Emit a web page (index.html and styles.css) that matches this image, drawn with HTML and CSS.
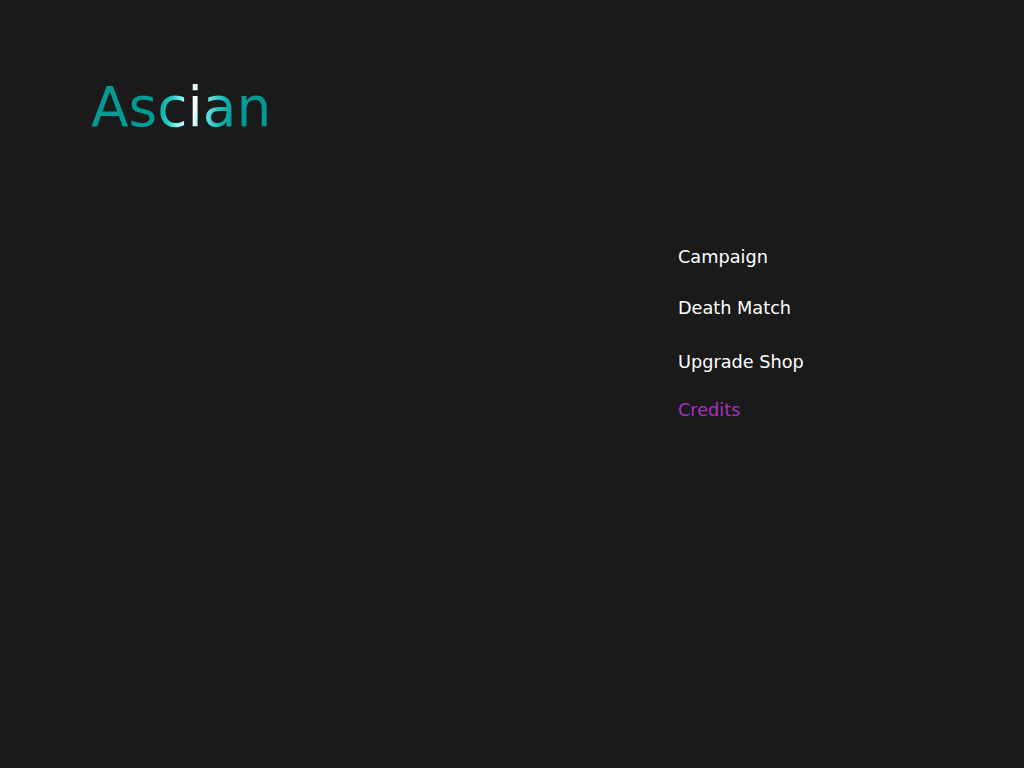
FILE: index.html
```html
<!DOCTYPE html>
<html>
<head>
<meta charset="utf-8">
<link rel="stylesheet" href="styles.css">
</head>
<body>
<div class="screen">
  <h1 class="title">Ascian</h1>
  <nav class="menu">
    <div class="item item-campaign">Campaign</div>
    <div class="item item-death">Death Match</div>
    <div class="item item-shop">Upgrade Shop</div>
    <div class="item item-credits active">Credits</div>
  </nav>
</div>
</body>
</html>
```
FILE: styles.css
```css
html, body {
  margin: 0;
  padding: 0;
  background: #1a1a1a;
}
.screen {
  width: 1024px;
  height: 768px;
  box-sizing: border-box;
  padding: 80px 0 0 91px;
  display: flex;
  flex-direction: column;
  font-family: "DejaVu Sans", Verdana, sans-serif;
}
.title {
  margin: 0;
  font-size: 55px;
  font-weight: normal;
  line-height: 55px;
  align-self: flex-start;
  color: #039a94;
  background: linear-gradient(100deg, #039a94 0%, #039a94 36%, #20c8c4 44%, #8ff4f2 50%, #ffffff 57%, #7ef0ee 62%, #22c0bc 70%, #039a94 78%, #039a94 100%);
  -webkit-background-clip: text;
  background-clip: text;
  -webkit-text-fill-color: transparent;
}
.menu {
  margin: 112px 0 0 587px;
  display: flex;
  flex-direction: column;
}
.item {
  font-size: 17.7px;
  line-height: 20px;
  color: #ffffff;
  white-space: nowrap;
}
.item-death { margin-top: 31px; }
.item-shop { margin-top: 34px; }
.item-credits { margin-top: 28px; }
.active { color: #a832c4; }
```
